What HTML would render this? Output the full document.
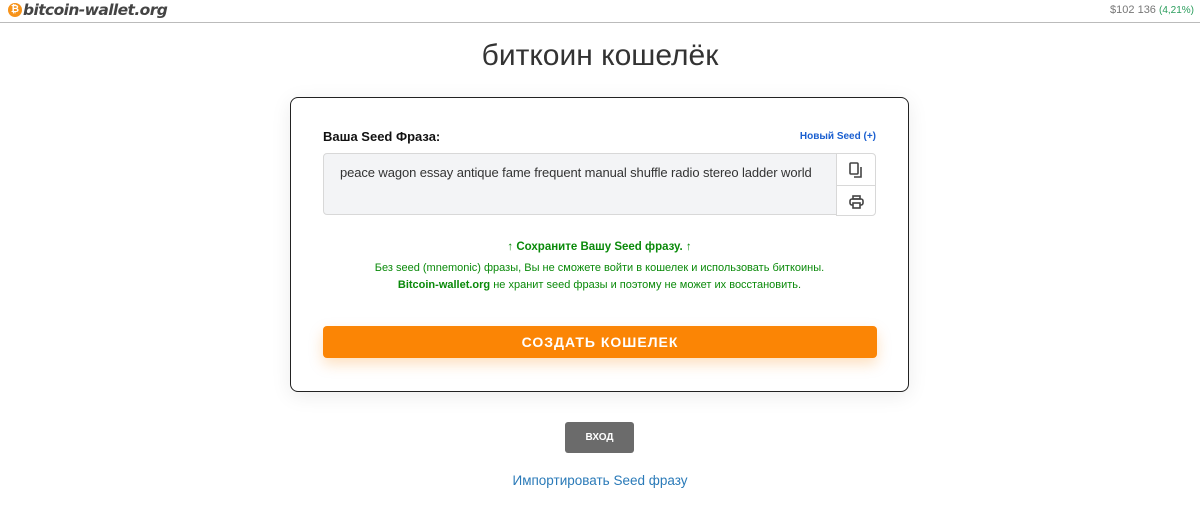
<!DOCTYPE html>
<html><head><meta charset="utf-8"><style>
body{margin:0;width:1200px;height:512px;background:#fff;font-family:"Liberation Sans",sans-serif;position:relative;overflow:hidden}
.hdr{position:absolute;left:0;top:0;width:1200px;height:22px;border-bottom:1px solid #bbb}
.logo{position:absolute;left:8px;top:1px;font-weight:bold;font-style:italic;color:#444;display:flex;align-items:center;font-family:"DejaVu Sans",sans-serif;letter-spacing:-0.6px;font-size:15.5px}
.coin{width:14px;height:14px;border-radius:50%;background:#f7931a;color:#fff;font-size:10px;text-align:center;line-height:14px;font-style:normal;margin-right:1px;letter-spacing:0}
.price{position:absolute;right:6px;top:4px;font-size:11px;color:#777}
.price span{color:#2a9d5c;font-size:10px}
h1{position:absolute;top:39px;left:0;width:1200px;text-align:center;margin:0;font-weight:normal;font-size:30px;color:#333}
.card{position:absolute;left:290px;top:97px;width:617px;height:293px;border:1px solid #222;border-radius:8px;box-shadow:0 4px 20px rgba(0,0,0,.08)}
.lbl{position:absolute;left:32px;top:31px;font-size:13px;font-weight:bold;color:#111}
.new{position:absolute;right:32px;top:33px;font-size:10px;font-weight:bold;color:#1a5fd0}
.ta{position:absolute;left:32px;top:55px;width:514px;height:62px;background:#f3f4f6;border:1px solid #d8d8d8;border-radius:4px 0 0 4px;font-size:13px;color:#333;padding:11px 0 0 16px;box-sizing:border-box;white-space:nowrap;letter-spacing:-0.1px}
.btns{position:absolute;left:545px;top:55px;width:40px;height:63px;border:1px solid #d8d8d8;border-radius:0 4px 4px 0;box-sizing:border-box}
.btns div{height:31px;display:flex;align-items:center;justify-content:center}
.btns div:first-child{border-bottom:1px solid #d8d8d8}
.msg{position:absolute;left:0;width:617px;text-align:center;color:#0a8a0a;font-size:11px}
.cta{position:absolute;left:32px;top:228px;width:554px;height:32px;background:#fb8505;border-radius:4px;color:#fff;font-weight:bold;font-size:14px;letter-spacing:1px;text-align:center;line-height:32px;box-shadow:0 6px 14px rgba(251,133,5,.25)}
.login{position:absolute;left:565px;top:422px;width:69px;height:31px;background:#6b6b6b;border-radius:3px;color:#fff;font-size:10px;font-weight:bold;text-align:center;line-height:31px}
.imp{position:absolute;top:473px;left:0;width:1200px;text-align:center;color:#2a7ab8;font-size:13.5px}
</style></head><body>
<div class="hdr"><div class="logo"><span class="coin">₿</span>bitcoin-wallet.org</div><div class="price">$102 136 <span>(4,21%)</span></div></div>
<h1>биткоин кошелёк</h1>
<div class="card">
<div class="lbl">Ваша Seed Фраза:</div>
<div class="new">Новый Seed (+)</div>
<div class="ta">peace wagon essay antique fame frequent manual shuffle radio stereo ladder world</div>
<div class="btns"><div><svg width="14" height="16" viewBox="0 0 14 16" fill="none" stroke="#444" stroke-width="1.6"><rect x="1" y="1" width="8" height="11" rx="1"/><path d="M12 5v10H5"/></svg></div><div><svg width="15" height="14" viewBox="0 0 15 14" fill="none" stroke="#444" stroke-width="1.6"><rect x="4" y="1" width="7" height="3"/><rect x="1" y="4" width="13" height="6" rx="2"/><rect x="4" y="8" width="7" height="5" fill="#fff"/></svg></div></div>
<div class="msg" style="top:143px;font-weight:bold;font-size:11.5px">↑ Сохраните Вашу Seed фразу. ↑</div>
<div class="msg" style="top:164px">Без seed (mnemonic) фразы, Вы не сможете войти в кошелек и использовать биткоины.</div>
<div class="msg" style="top:181px"><b>Bitcoin-wallet.org</b> не хранит seed фразы и поэтому не может их восстановить.</div>
<div class="cta">СОЗДАТЬ КОШЕЛЕК</div>
</div>
<div class="login">ВХОД</div>
<div class="imp">Импортировать Seed фразу</div>
</body></html>
